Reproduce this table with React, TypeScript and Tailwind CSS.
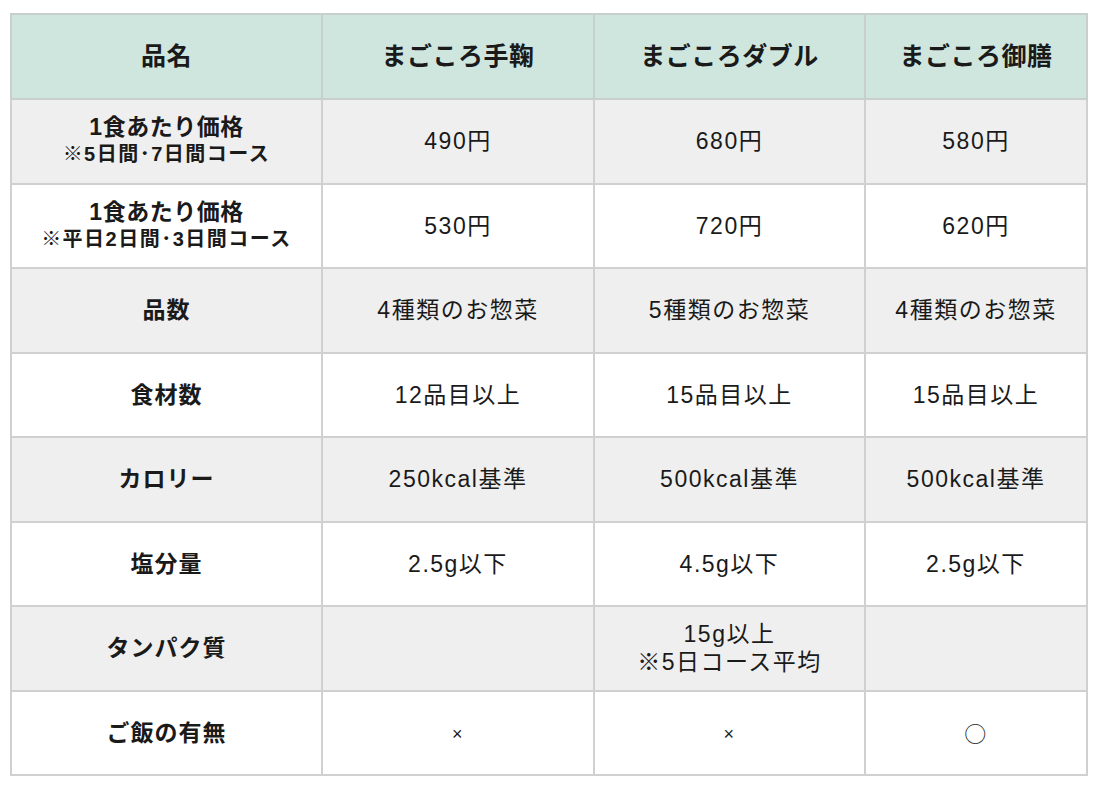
import React from "react";

type Row = { label: React.ReactNode; cells: React.ReactNode[]; gray: boolean };

const rows: Row[] = [
  {
    label: (
      <>
        <div className="text-[23px] leading-[27px] tracking-[0.5px]">1食あたり価格</div>
        <div className="text-[20px] leading-[27px] tracking-[1.5px]">※5日間･7日間コース</div>
      </>
    ),
    cells: ["490円", "680円", "580円"],
    gray: true,
  },
  {
    label: (
      <>
        <div className="text-[23px] leading-[27px] tracking-[0.5px]">1食あたり価格</div>
        <div className="text-[20px] leading-[27px] tracking-[1.5px]">※平日2日間･3日間コース</div>
      </>
    ),
    cells: ["530円", "720円", "620円"],
    gray: false,
  },
  { label: "品数", cells: ["4種類のお惣菜", "5種類のお惣菜", "4種類のお惣菜"], gray: true },
  { label: "食材数", cells: ["12品目以上", "15品目以上", "15品目以上"], gray: false },
  { label: "カロリー", cells: ["250kcal基準", "500kcal基準", "500kcal基準"], gray: true },
  { label: "塩分量", cells: ["2.5g以下", "4.5g以下", "2.5g以下"], gray: false },
  {
    label: "タンパク質",
    cells: [
      "",
      <>
        <div>15g以上</div>
        <div>※5日コース平均</div>
      </>,
      "",
    ],
    gray: true,
  },
  {
    label: "ご飯の有無",
    cells: [
      <span className="text-[18px]">×</span>,
      <span className="text-[18px]">×</span>,
      <span className="text-[22px]" style={{ fontFamily: '"Noto Sans CJK JP", sans-serif' }}>
        ○
      </span>,
    ],
    gray: false,
  },
];

export default function App() {
  return (
    <div
      className="w-[1098px] h-[788px] bg-white pt-[13px] pl-[10px]"
      style={{ fontFamily: '"Liberation Sans", "Noto Sans CJK JP", sans-serif' }}
    >
      <table className="border-collapse table-fixed w-[1076px] text-[#1a1a1a]">
        <colgroup>
          <col className="w-[311px]" />
          <col className="w-[272px]" />
          <col className="w-[271px]" />
          <col className="w-[222px]" />
        </colgroup>
        <thead>
          <tr className="h-[85px] bg-[#cfe6df]">
            {["品名", "まごころ手鞠", "まごころダブル", "まごころ御膳"].map((h) => (
              <th
                key={h}
                className="border-2 border-[#c9cfcd] text-center align-middle font-bold text-[25px] tracking-[0.5px]"
              >
                {h}
              </th>
            ))}
          </tr>
        </thead>
        <tbody>
          {rows.map((r, i) => (
            <tr key={i} className={`h-[84.5px] ${r.gray ? "bg-[#efefef]" : "bg-white"}`}>
              <td className="border-2 border-[#d0d0d0] text-center align-middle font-bold text-[23px] tracking-[1px]">
                {r.label}
              </td>
              {r.cells.map((c, j) => (
                <td
                  key={j}
                  className="border-2 border-[#d0d0d0] text-center align-middle text-[23px] leading-[28px] tracking-[1.5px]"
                >
                  {c}
                </td>
              ))}
            </tr>
          ))}
        </tbody>
      </table>
    </div>
  );
}
